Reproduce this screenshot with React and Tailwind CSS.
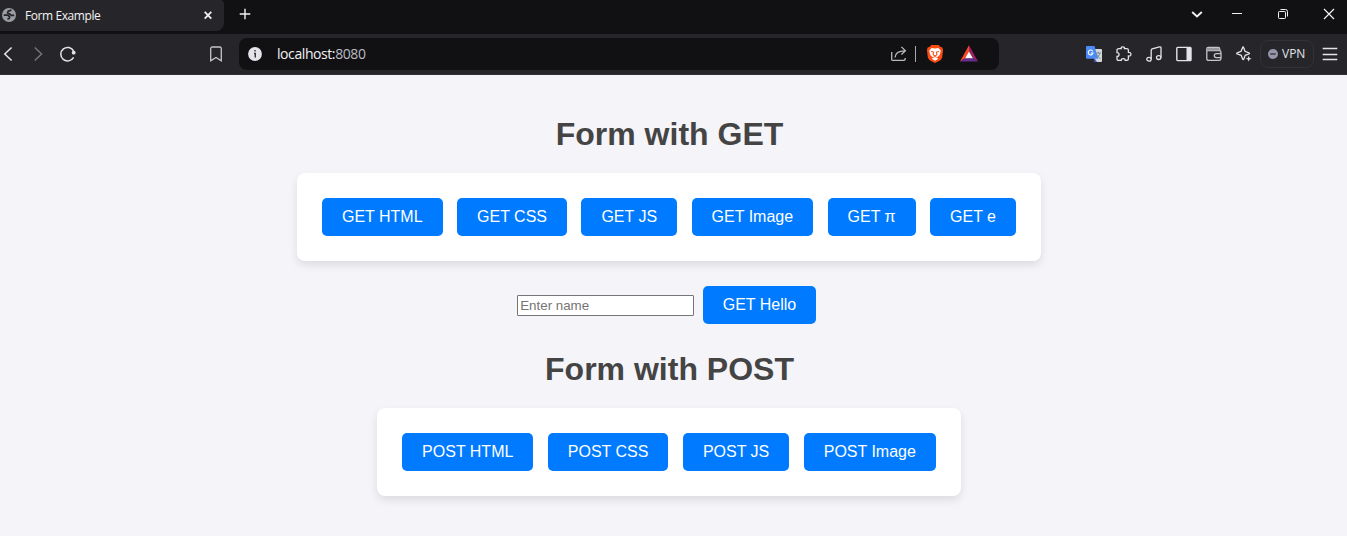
import React from "react";

function Icon({ className = "", size = 16, children }) {
  return (
    <svg
      viewBox="0 0 16 16"
      width={size}
      height={size}
      fill="none"
      stroke="currentColor"
      strokeWidth="1.2"
      className={"shrink-0 overflow-visible " + className}
    >
      {children}
    </svg>
  );
}

function TabStrip() {
  return (
    <div className="flex h-[34px] items-start bg-[#111113] text-[#f2f2f4]">
      <div className="flex h-[31px] w-[224px] items-center rounded-br-lg rounded-tr-[4px] bg-[#26262a] pl-[2px]">
        <Icon size={14} className="mt-[-1px]">
          <circle cx="8" cy="8" r="8" fill="#9a9da3" stroke="none" />
          <path
            d="M10.8 2.4 L7.2 3.6 L6.4 5.6 L8.6 6.8 L10.8 8.4 H14 M2 8.2 H6.6 L8.8 10.2 L8.2 12 L6.2 12.8"
            stroke="#26262a"
            strokeWidth="2"
            strokeLinejoin="round"
          />
        </Icon>
        <span className="ml-[9px] w-[176px] whitespace-nowrap text-[12px] leading-[16px] tracking-[-0.42px]">Form Example</span>
        <Icon size={14}>
          <path d="M4.2 3.4 L11.8 11 M11.8 3.4 L4.2 11" strokeWidth="2" />
        </Icon>
      </div>
      <Icon className="ml-[13px] mt-[6px]">
        <path d="M8 2.7 V13.3 M2.7 8 H13.3" strokeWidth="1.4" />
      </Icon>
      <Icon className="ml-auto mt-[6px]">
        <path d="M3.2 6 L8 10.4 L12.8 6" strokeWidth="1.9" />
      </Icon>
      <Icon className="ml-6 mt-[6px]">
        <path d="M3 7.5 H13" strokeWidth="1" />
      </Icon>
      <Icon className="ml-[30px] mt-[6px]">
        <rect x="3.5" y="5.5" width="7" height="7" rx="0.8" strokeWidth="1" />
        <path d="M5.5 3.5 H10.5 Q12.5 3.5 12.5 5.5 V10.5" strokeWidth="1" />
      </Icon>
      <Icon className="ml-[30px] mr-[10px] mt-[6px]">
        <path d="M3 3 L13 13 M13 3 L3 13" strokeWidth="1.2" />
      </Icon>
    </div>
  );
}

function AddressBar() {
  return (
    <div className="ml-[15px] flex h-8 w-[760px] shrink-0 items-center rounded-lg bg-[#111113] pl-2">
      <Icon>
        <circle cx="8" cy="8" r="6.9" fill="#e5e4ea" stroke="none" />
        <path d="M8 4 V5.6 M7 7.5 H8.3 V11.5" stroke="#333338" strokeWidth="1.4" />
      </Icon>
      <span className="ml-[14px] w-[614px] whitespace-nowrap text-[14px] leading-5 tracking-[-0.42px] text-[#f2f2f4]">
        localhost:<span className="text-[#bcbbc2]">8080</span>
      </span>
      <Icon className="text-[#b9b8be]">
        <path d="M.7 6 V13.2 Q.7 14.4 1.9 14.4 H12.8 Q14.3 14.4 14.3 12 M4 11.5 C4.3 7 7 4.8 13.8 4.8 M10.4 .9 L14.4 4.8 L10.4 8.5" strokeWidth="1.3" />
      </Icon>
      <div className="ml-[8px] h-4 w-px bg-[#a9a8ae]" />
      <Icon className="ml-[10px]" size={18}>
        <path d="M4.7 .1 H11.3 L12.6 1.5 L14.5 2.2 L15.2 4.5 L14.3 11.3 L12.8 13.5 L8 16 L3.2 13.5 L1.7 11.3 L.8 4.5 L1.5 2.2 L3.4 1.5 Z" fill="#fb4b12" stroke="none" />
        <path d="M5 2.7 L8 3.1 L11 2.7 L13.2 5.2 L12.2 8.8 L9.5 11.4 L11 12.3 L8 14 L5 12.3 L6.5 11.4 L3.8 8.8 L2.8 5.2 Z" fill="#fff" stroke="none" />
        <path d="M4.5 5.7 L6.8 6.3 L6.3 8.5 L8 10 L9.7 8.5 L9.2 6.3 L11.5 5.7 M6.5 11 L8 10 L9.5 11" stroke="#fb4b12" strokeWidth=".9" />
      </Icon>
      <Icon className="ml-4" size={18}>
        <path d="M8 .3 V6 L4.5 11.7 L0 14.6 Z" fill="#ff4724" stroke="none" />
        <path d="M8 .3 L16 14.6 L11.5 11.7 L8 6 Z" fill="#9e1f63" stroke="none" />
        <path d="M0 14.6 L4.5 11.7 H11.5 L16 14.6 Z" fill="#662d91" stroke="none" />
        <path d="M8 5.8 L11.5 11.7 H4.5 Z" fill="#fff" stroke="none" />
      </Icon>
    </div>
  );
}

function Toolbar() {
  return (
    <div className="flex h-[41px] items-center border-b border-[#303036] bg-[#26262a] text-[#e4e3e9]">
      <Icon>
        <path d="M11.6 1.5 L4.8 8 L11.6 14.5" strokeWidth="1.5" />
      </Icon>
      <Icon className="ml-[14px] text-[#77767d]">
        <path d="M4.8 1.5 L11.6 8 L4.8 14.5" strokeWidth="1.4" />
      </Icon>
      <Icon className="ml-[14px]">
        <path d="M13.7 5.2 A6.8 6.8 0 1 0 13.6 11.4" strokeWidth="1.5" />
        <circle cx="13.7" cy="6.7" r="1.9" fill="currentColor" stroke="none" />
      </Icon>
      <Icon className="ml-[132px] text-[#c6c5cb]">
        <path d="M4.4 1 H11.6 Q13.3 1 13.3 2.6 V14.8 L8 11.5 L2.7 14.8 V2.6 Q2.7 1 4.4 1 Z" strokeWidth="1.3" />
      </Icon>
      <AddressBar />
      <Icon className="ml-[87px]">
        <path d="M7 3 H15 Q16 3 16 4 V15 Q16 16 15 16 H9 Z" fill="#d5d8dc" stroke="none" />
        <path d="M8.7 12.6 L11 16 H8 Z" fill="#3f58c8" stroke="none" />
        <path d="M1 0 H8.5 L12.2 12.8 H1 Q0 12.8 0 11.8 V1 Q0 0 1 0 Z" fill="#4c8bf5" stroke="none" />
        <path d="M6.7 5.2 A2.4 2.4 0 1 0 7 7 H4.9" stroke="#fff" strokeWidth="1.1" />
        <path d="M9.8 7 H15 M12.4 5.8 V7 M14 7 Q13 10.5 10.8 12 M11.2 8.5 Q12 11 14.5 13" stroke="#6d8790" strokeWidth=".9" />
      </Icon>
      <Icon className="ml-[14px]">
        <path
          d="M3 2.7 H5.2 Q4.8 .8 6.8 .8 Q8.8 .8 8.4 2.7 H10.8 Q12.4 2.7 12.4 4.3 V6.4 Q14.9 6.2 14.9 8.2 Q14.9 10.3 12.4 10 V12.8 Q12.4 14.4 10.8 14.4 H9.2 Q9.2 12.6 7.2 12.6 Q5.2 12.6 5.2 14.4 H2.6 Q1 14.4 1 12.8 V10.5 Q3.1 10.5 3.1 8.6 Q3.1 6.7 1 6.7 V4.3 Q1 2.7 3 2.7 Z"
          strokeWidth="1.3"
        />
      </Icon>
      <Icon className="ml-[14px]">
        <path d="M5.2 13 V4.2 Q5.2 3.2 6.2 2.9 L13.5 .9 Q15 .5 15 2 V11.4" strokeWidth="1.3" />
        <ellipse cx="3" cy="13.2" rx="2.2" ry="1.9" strokeWidth="1.3" />
        <ellipse cx="12.7" cy="11.6" rx="2.2" ry="1.9" strokeWidth="1.3" />
      </Icon>
      <Icon className="ml-[14px]">
        <rect x=".8" y="1.4" width="14.2" height="13.2" rx=".8" strokeWidth="1.4" />
        <path d="M10.5 1 H15 V15 H10.5 Z" fill="currentColor" stroke="none" />
      </Icon>
      <Icon className="ml-[14px] text-[#c6c5cb]">
        <path d="M.8 4.8 V3 Q.8 1.4 2.4 1.4 H12 Q13.8 1.4 13.8 3.2 V4.7 M.8 3.5 V12.5 Q.8 14.4 2.6 14.4 H13.2 Q15 14.4 15 12.6 V6.5 Q15 4.7 13.2 4.7 H.8 M15 11.6 H10.3 Q8.3 11.6 8.3 9.6 Q8.3 7.7 10.3 7.7 H15" strokeWidth="1.3" />
        <path d="M1.4 2 H13.2 V4.5 H1.4 Z" fill="#98979d" stroke="none" />
      </Icon>
      <Icon className="ml-[14px]">
        <path d="M7 1 Q7.5 1 7.8 2 L9 5.3 L12.8 6.8 Q14.2 7.4 12.8 8 L9.2 9.3 L7.8 13 Q7.2 14.3 6.6 13 L5.2 9.3 L1.3 8 Q.1 7.4 1.3 6.8 L5.1 5.3 L6.4 2 Q6.6 1 7 1 Z" strokeWidth="1.3" />
        <path d="M12.7 9.8 L13.5 12 L15.7 12.8 L13.5 13.6 L12.7 15.8 L11.9 13.6 L9.7 12.8 L11.9 12 Z" fill="currentColor" stroke="none" />
      </Icon>
      <div className="ml-2 flex h-7 w-[54px] shrink-0 items-center rounded-lg border border-[#313136] pl-[7px]">
        <Icon size={10}>
          <circle cx="8" cy="8" r="8" fill="#9595ab" stroke="none" />
          <path d="M3.7 8 H12.3" stroke="#34343e" strokeWidth="2.2" />
        </Icon>
        <span className="ml-1 text-[12px] leading-4">VPN</span>
      </div>
      <Icon className="ml-2">
        <path d="M.7 2.5 H15.3 M.7 8.5 H15.3 M.7 13.5 H15.3" strokeWidth="1.3" />
      </Icon>
    </div>
  );
}

function Button({ children }) {
  return (
    <button className="h-[38px] shrink-0 whitespace-nowrap rounded-[5px] bg-[#007bff] px-5 pb-px text-[16px] leading-[18px] text-white">
      {children}
    </button>
  );
}

function Card({ labels }) {
  return (
    <div className="flex gap-[14.45px] rounded-lg bg-white p-[25px] shadow-[0_4px_8px_rgba(0,0,0,0.1)]">
      {labels.map((label) => (
        <Button key={label}>{label}</Button>
      ))}
    </div>
  );
}

function Heading({ children }) {
  return <h1 className="h-[37px] whitespace-nowrap pl-px pt-px text-[32px] font-bold leading-[37px] text-[#444]">{children}</h1>;
}

export default function App() {
  return (
    <div className="h-[536px] w-[1347px] overflow-hidden bg-[#f4f4f9] font-['Open_Sans','Noto_Sans',sans-serif]">
      <TabStrip />
      <Toolbar />
      <main className="flex flex-col items-center pr-[9px] pt-10 font-['Liberation_Sans',Arial,sans-serif]">
        <Heading>Form with GET</Heading>
        <div className="mt-[21px]">
          <Card labels={["GET HTML", "GET CSS", "GET JS", "GET Image", "GET π", "GET e"]} />
        </div>
        <form className="mr-[5px] mt-[25px] flex items-start gap-[9px]" onSubmit={(e) => e.preventDefault()}>
          <input
            placeholder="Enter name"
            className="mt-[9px] h-[21px] w-[177px] rounded-[1px] border border-[#767676] bg-white px-[2.5px] text-[13.333px] leading-[15px] placeholder:text-[#757575]"
          />
          <Button>GET Hello</Button>
        </form>
        <div className="mt-[26px]">
          <Heading>Form with POST</Heading>
        </div>
        <div className="mt-[21px]">
          <Card labels={["POST HTML", "POST CSS", "POST JS", "POST Image"]} />
        </div>
      </main>
    </div>
  );
}
